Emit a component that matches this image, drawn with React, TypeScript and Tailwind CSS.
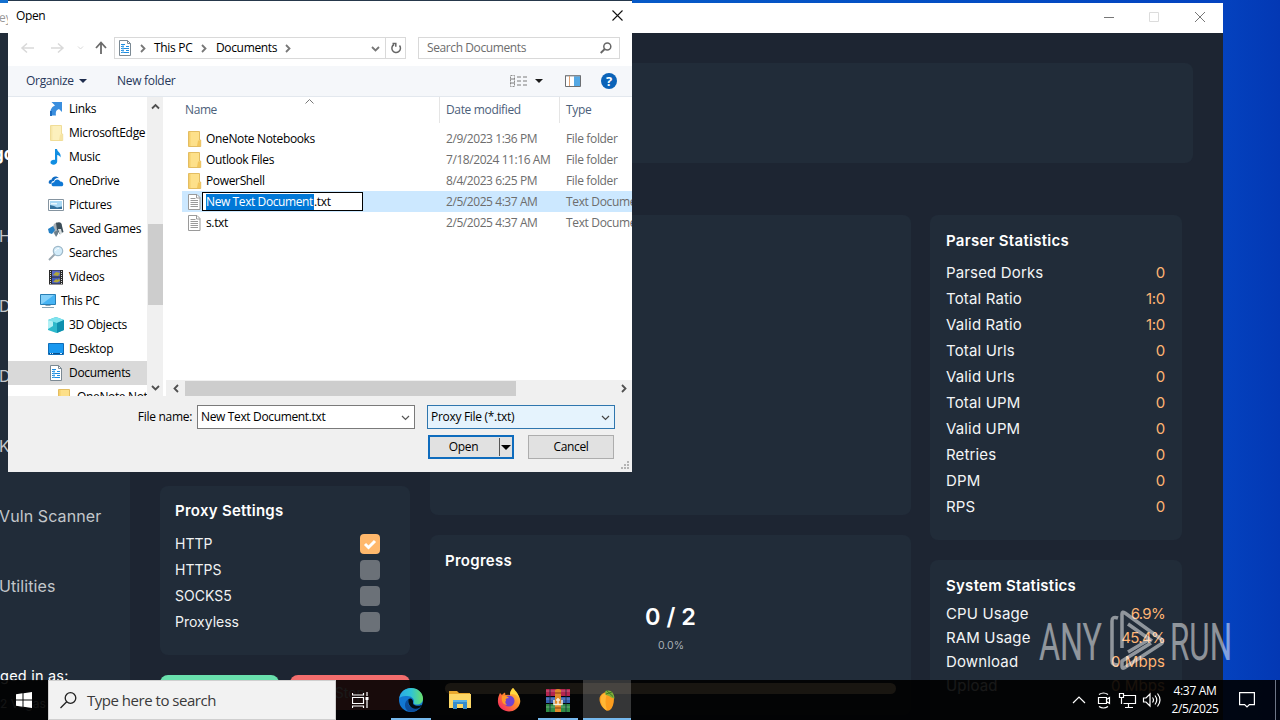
import type { ReactNode } from "react";

const SEGOE = "font-['Open_Sans','Noto_Sans',sans-serif]";
const POPPINS = "font-['Inter','Open_Sans',sans-serif]";

const parserStats = [
  { label: "Parsed Dorks", value: "0" },
  { label: "Total Ratio", value: "1:0" },
  { label: "Valid Ratio", value: "1:0" },
  { label: "Total Urls", value: "0" },
  { label: "Valid Urls", value: "0" },
  { label: "Total UPM", value: "0" },
  { label: "Valid UPM", value: "0" },
  { label: "Retries", value: "0" },
  { label: "DPM", value: "0" },
  { label: "RPS", value: "0" },
];

const systemStats = [
  { label: "CPU Usage", value: "6.9%" },
  { label: "RAM Usage", value: "45.4%" },
  { label: "Download", value: "0 Mbps" },
  { label: "Upload", value: "0 Mbps" },
];

const proxyTypes = [
  { label: "HTTP", checked: true },
  { label: "HTTPS", checked: false },
  { label: "SOCKS5", checked: false },
  { label: "Proxyless", checked: false },
];

const sidebarItems = ["H", "D", "D", "K", "Vuln Scanner", "Utilities"];

const files = [
  { name: "OneNote Notebooks", date: "2/9/2023 1:36 PM", type: "File folder" },
  { name: "Outlook Files", date: "7/18/2024 11:16 AM", type: "File folder" },
  { name: "PowerShell", date: "8/4/2023 6:25 PM", type: "File folder" },
  { name: "New Text Document.txt", date: "2/5/2025 4:37 AM", type: "Text Document", editing: true },
  { name: "s.txt", date: "2/5/2025 4:37 AM", type: "Text Document" },
];

function Icon({ children, className = "" }: { children: ReactNode; className?: string }) {
  return (
    <svg viewBox="0 0 16 16" className={`block h-4 w-4 shrink-0 ${className}`} fill="none">
      {children}
    </svg>
  );
}

function Chevron({ dir, thin, className = "" }: { dir: "up" | "down" | "left" | "right"; thin?: boolean; className?: string }) {
  const paths = {
    up: "M1 6.5 4.5 3 8 6.5",
    down: "M1 3 4.5 6.5 8 3",
    left: "M6 1 2.5 4.5 6 8",
    right: "M3 1 6.5 4.5 3 8",
  };
  return (
    <svg viewBox="0 0 9 9" className={`block h-[9px] w-[9px] shrink-0 ${className}`} fill="none">
      <path d={paths[dir]} stroke="currentColor" strokeWidth={thin ? 1.2 : 1.8} />
    </svg>
  );
}

function FolderIcon({ pale = false }: { pale?: boolean }) {
  return (
    <Icon>
      <path d="M2.5.5h11V9h1.2v6.5H2.5z" fill={pale ? "#fcf0bd" : "#fde08a"} stroke={pale ? "#f0dd98" : "#e3bd62"} />
      <path d="M12 9.5h2.5V15H11z" fill={pale ? "#f6e4a4" : "#f2c65c"} />
      <path d="M3 1h1.5v14H3z" fill={pale ? "#f7e7aa" : "#f6cf6c"} />
    </Icon>
  );
}

function TextFileIcon() {
  return (
    <Icon>
      <path d="M2.5.5H11l3 3v12H2.5z" fill="#fff" stroke="#9a9a9a" />
      <path d="M10.500.5V4H14M4.500 4.500h5M4.500 6.500H12M4.500 8.500H12M4.500 10.500H12M4.500 12.500H12" stroke="#9a9a9a" />
    </Icon>
  );
}

function DocumentsIcon() {
  return (
    <Icon>
      <path d="M2.500.5h8l3 3v12h-11z" fill="#fff" stroke="#7b8993" />
      <path d="M10.500.5v3h3" stroke="#7b8993" />
      <path d="M4 4.500h4M4 6.500h3M9 6.500h3M4 8.500h8M4 10.500h3M9 10.500h3M4 12.500h8" stroke="#1f8de0" strokeWidth="1.200" />
      <path d="M6 5v8" stroke="#6bb8ee" />
    </Icon>
  );
}

const treeItems: { label: string; icon: ReactNode; root?: boolean; selected?: boolean }[] = [
  {
    label: "Links",
    icon: (
      <Icon>
        <path d="M3.500 1H14v10l-3-3c-3 1-3.500 3-3 6.500H3C1.500 10 3 6 7 4.500z" fill="#3a8ede" />
        <path d="M2 10h2v5H2z" fill="#1d6cc0" />
      </Icon>
    ),
  },
  { label: "MicrosoftEdge", icon: <FolderIcon pale /> },
  {
    label: "Music",
    icon: (
      <Icon>
        <path d="M7 0h2c.3 3 4.500 3.500 3.500 8.500-.7-1.700-1.700-2.300-3.300-2.500v6.500c0 2-1.700 3.200-3.700 3.200-1.600 0-3-.8-3-2.200 0-1.800 2-3 4.500-2.600z" fill="#118ee2" />
      </Icon>
    ),
  },
  {
    label: "OneDrive",
    icon: (
      <Icon>
        <path d="M1 10.500C0 8 2 6.500 3.500 6.700 4 3.500 8.500 2 11 5.300c-3-.8-4.500 1-5 2.700-2 0-2.800 1.300-2.500 3z" fill="#0f6cc4" />
        <path d="M5 13.300c-2.500-.8-1.500-4.300 1.200-4.100.4-3.400 4.900-3.700 6-.7 2.800-.5 4.300 3.500 1.800 4.800z" fill="#0f78d4" />
      </Icon>
    ),
  },
  {
    label: "Pictures",
    icon: (
      <Icon>
        <path d="M.5 2.500h15v11H.5z" fill="#fff" stroke="#8594a0" />
        <path d="M2 4h12v8H2z" fill="#a9d8f4" />
        <path d="m2 8 4 1 3 1.500 5-1V12H2z" fill="#34719c" />
        <path d="M3 6h6v1.500H3z" fill="#e8f6fd" />
      </Icon>
    ),
  },
  {
    label: "Saved Games",
    icon: (
      <Icon>
        <path d="m4 8 2-5 3-2 1 6-2 8-2-2z" fill="#aab2b8" />
        <path d="M8 2c4-2 6 0 6 3l1.500 6-4 2-2.500-4z" fill="#3c4e59" />
        <path d="M10 8h3l1 4-2 2z" fill="#d8dee0" />
        <path d="m0 8 5-3 2 4-3 4-3-1z" fill="#2580c4" />
        <path d="m6 11 4-2v4l-2 3z" fill="#6b7e8b" />
      </Icon>
    ),
  },
  {
    label: "Searches",
    icon: (
      <Icon>
        <path d="m1 15 6-6" stroke="#9aa7b0" strokeWidth="2" />
        <circle cx="10" cy="6" r="4.700" fill="#d3ecfa" stroke="#9fb9c9" strokeWidth="1.200" />
        <path d="M7.500 6C8 4 9 3.500 11 3.300" stroke="#fff" />
      </Icon>
    ),
  },
  {
    label: "Videos",
    icon: (
      <Icon>
        <path d="M1 1h14v14.500H1z" fill="#2b2b2b" />
        <path d="M4 1.500h8v6H4z" fill="#5a68c8" />
        <path d="M4 8.500h8v6H4z" fill="#445ac0" />
        <path d="m5 6 3-3 4 1-2 3zM5 13l3-3 2 1 1-2 1 3-3 1.500z" fill="#b2a737" />
        <path d="M2.500 2v13M13.500 2v13" stroke="#d8d8d8" strokeDasharray="1 1" />
      </Icon>
    ),
  },
  {
    label: "This PC",
    root: true,
    icon: (
      <Icon>
        <path d="M.5 1.500h15v10H.5z" fill="#47b4f4" stroke="#297fb5" />
        <path d="M1 2h13L2 11H1z" fill="#85d1fa" />
        <path d="M5.500 12.500h5M2 14.500h12" stroke="#8aa3b3" />
      </Icon>
    ),
  },
  {
    label: "3D Objects",
    icon: (
      <Icon>
        <path d="m8 0 8 3v10l-7.500 3L0 13V3z" fill="#2cb8cb" />
        <path d="m8 0 8 3-7 3-9-3z" fill="#7fe3ee" />
        <path d="M9 6 16 3v10l-7 3z" fill="#0d8fae" />
        <path d="m0 3 5 1.500V9L0 12z" fill="#b2f0f5" />
      </Icon>
    ),
  },
  {
    label: "Desktop",
    icon: (
      <Icon>
        <path d="M.5 2.500h15v11H.5z" fill="#1898f0" stroke="#0f6db8" />
        <path d="M1 12.500h14" stroke="#0a4f8a" />
        <path d="M2 12.500h1M4 12.500h1M12 12.500h2" stroke="#d4ecfc" />
      </Icon>
    ),
  },
  { label: "Documents", icon: <DocumentsIcon />, selected: true },
];

function Card({ title, className = "", children }: { title?: string; className?: string; children?: ReactNode }) {
  return (
    <section className={`shrink-0 rounded-lg bg-[#212c39] ${className}`}>
      {title && <h2 className="h-[22px] text-[15px] leading-[22px] font-semibold tracking-[0.27px] text-white">{title}</h2>}
      {children}
    </section>
  );
}

function ParserApp() {
  return (
    <div className={`absolute top-[3px] left-0 flex h-[717px] w-[1223px] flex-col overflow-hidden bg-[#1d2532] ${POPPINS}`}>
      <header className="flex h-[30px] shrink-0 items-center bg-white text-[#8c8c8c]">
        <span className={`-ml-px text-[12px] text-[#999] ${SEGOE}`}>ey</span>
        <div className="ml-auto flex">
          <svg viewBox="0 0 138 30" className="h-[30px] w-[138px]" fill="none">
            <path d="M19 14.500h10" stroke="#777" />
            <path d="M64.500 9.500h9v9h-9z" stroke="#dcdcdc" />
            <path d="m110 9 10 10m0-10-10 10" stroke="#777" />
          </svg>
        </div>
      </header>
      <div className="flex min-h-0 flex-1">
        <aside className="flex w-[130px] shrink-0 flex-col bg-[#212c39] text-[16px] text-[#c3c7cb]">
          <div className="mt-[106px] h-[30px] shrink-0 text-[17px] leading-[30px] font-bold text-white">
            <span className="-ml-[7px]">go</span>
          </div>
          <nav className="mt-8 flex shrink-0 flex-col">
            {sidebarItems.map((item, i) => (
              <div key={i} className="-ml-px flex h-[70px] items-center tracking-[0.1px] whitespace-nowrap">
                {item}
              </div>
            ))}
          </nav>
          <div className="mt-[43px] -ml-[9px] h-6 shrink-0 text-[14.5px] leading-6 tracking-[0.2px] whitespace-nowrap text-white">gged in as:</div>
          <div className="mt-2 shrink-0 text-[12px] leading-4 whitespace-nowrap">2 Vegas</div>
        </aside>
        <main className="flex flex-1 flex-col pt-[30px] pl-[30px]">
          <Card className="h-[100px] w-[1033px]" />
          <div className="mt-[52px] flex min-h-0 flex-1 items-start">
            <div className="flex w-[250px] shrink-0 flex-col">
              <Card className="h-[251px]" />
              <Card title="Proxy Settings" className="mt-5 h-[169px] px-[15px] pt-3.5">
                <div className="mt-2">
                  {proxyTypes.map(({ label, checked }) => (
                    <div key={label} className="flex h-[26px] items-center justify-between pr-[15px] text-[14px] text-[#f0f2f3]">
                      <span>{label}</span>
                      <span className={`mt-px flex h-5 w-5 items-center justify-center rounded ${checked ? "bg-[#ffb86c]" : "bg-[#6b7178]"}`}>
                        {checked && (
                          <svg viewBox="0 0 14 12" className="h-3 w-3.5" fill="none">
                            <path d="m2 6 3.500 3.500L12 3" stroke="#fff" strokeWidth="3" />
                          </svg>
                        )}
                      </span>
                    </div>
                  ))}
                </div>
              </Card>
              <div className="mt-5 flex gap-[11px] text-[14px] text-white">
                <button className="h-[35px] w-[119px] rounded-lg bg-[#69e0ad]">Start</button>
                <button className="h-[35px] w-[120px] rounded-lg bg-[#f36d6d]">Stop</button>
              </div>
            </div>
            <div className="ml-5 flex w-[481px] shrink-0 flex-col gap-5">
              <Card className="h-[300px]" />
              <Card title="Progress" className="h-[180px] px-[15px] pt-[15px]">
                <div className="mt-[29px] text-center text-[23.5px] leading-[32px] font-semibold text-white">0 / 2</div>
                <div className="mt-[5px] pl-px text-center text-[10.5px] leading-4 text-[#a9afb5]">0.0%</div>
                <div className="mt-[29px] h-[11px] rounded-full bg-[#ffd9a8]" />
              </Card>
            </div>
            <div className="ml-[19px] flex w-[252px] shrink-0 flex-col gap-5">
              <Card title="Parser Statistics" className="h-[325px] px-4 pt-[15px]">
                <div className="mt-2">
                  {parserStats.map(({ label, value }) => (
                    <div key={label} className="flex h-[26px] items-center justify-between pr-px text-[15px] text-[#f3f5f6]">
                      <span className="tracking-[0.15px]">{label}</span>
                      <span className="tracking-[-0.3px] text-[#ffb573]">{value}</span>
                    </div>
                  ))}
                </div>
              </Card>
              <Card title="System Statistics" className="h-[170px] px-4 pt-[15px]">
                <div className="mt-[5px]">
                  {systemStats.map(({ label, value }) => (
                    <div key={label} className="flex h-6 items-center justify-between pr-px text-[15px] text-[#f3f5f6]">
                      <span className="tracking-[0.15px]">{label}</span>
                      <span className={`text-[#ffb573] ${value.endsWith("%") ? "tracking-[-0.7px]" : "tracking-[0.1px]"}`}>{value}</span>
                    </div>
                  ))}
                </div>
              </Card>
            </div>
          </div>
        </main>
      </div>
    </div>
  );
}

function OpenDialog() {
  return (
    <div className={`absolute top-0 left-2 flex h-[472px] w-[624px] flex-col overflow-hidden border-t border-[#26384b] bg-white text-[12px] leading-4 tracking-[-0.35px] text-black ${SEGOE}`}>
      <div className="flex h-[29px] shrink-0 items-center justify-between pr-[9px] pl-2">
        <span className="tracking-[-0.4px]">Open</span>
        <svg viewBox="0 0 11 11" className="h-[11px] w-[11px]">
          <path d="m.5.5 10 10m0-10-10 10" stroke="#111" strokeWidth="1.100" />
        </svg>
      </div>

      <div className="flex h-9 shrink-0 items-center pl-3">
        <svg viewBox="0 0 94 20" className="h-5 w-[94px] shrink-0" fill="none">
          <path d="M14 10H2m5-4.500L2 10l5 4.500" stroke="#d9d9d9" strokeWidth="1.500" />
          <path d="M31 10h12m-5-4.500 5 4.500-5 4.500" stroke="#d9d9d9" strokeWidth="1.500" />
          <path d="m58 8.500 2.500 2.500L63 8.500" stroke="#d9d9d9" />
          <path d="M81 16V5m-5 5 5-5.500 5 5.500" stroke="#6a6a6a" strokeWidth="1.800" />
        </svg>
        <div className="flex h-[22px] w-[292px] shrink-0 items-center border border-[#d9d9d9] pl-[2px]">
          <DocumentsIcon />
          <Chevron dir="right" className="ml-[5px] text-[#777]" />
          <span className="ml-[7px] w-[40px] tracking-[-0.3px] whitespace-nowrap">This PC</span>
          <Chevron dir="right" className="ml-[5px] text-[#777]" />
          <span className="ml-[8px] w-[62px]">Documents</span>
          <Chevron dir="right" className="ml-[5px] text-[#777]" />
          <Chevron dir="down" className="ml-auto text-[#777]" />
          <div className="ml-[5px] flex h-full w-[20px] items-center justify-center border-l border-[#d9d9d9]">
            <svg viewBox="0 0 12 12" className="h-3 w-3" fill="none">
              <path d="M9.500 3.500A4.300 4.300 0 1 1 4 2.500M2.500 1.500h3.300v3.300" stroke="#666" strokeWidth="1.500" />
            </svg>
          </div>
        </div>
        <div className="ml-3 flex h-[22px] w-[202px] shrink-0 items-center justify-between border border-[#d9d9d9] pr-[7px] pl-2 text-[#6d6d6d]">
          <span className="tracking-[-0.4px]">Search Documents</span>
          <svg viewBox="0 0 12 12" className="h-3 w-3" fill="none">
            <circle cx="7.300" cy="4.500" r="3.500" stroke="#666" strokeWidth="1.500" />
            <path d="M4.800 7 .7 11" stroke="#666" strokeWidth="1.800" />
          </svg>
        </div>
      </div>

      <div className="flex h-[31px] shrink-0 items-center border-b border-[#e3e8ee] bg-[#f5f7fa] pl-[18px] text-[#27375b]">
        <span className="w-[48px] tracking-[-0.3px]">Organize</span>
        <svg viewBox="0 0 8 4" className="ml-[5px] h-1 w-2">
          <path d="M0 0h8L4 4z" fill="#1e2d4d" />
        </svg>
        <span className="ml-[30px] tracking-[-0.3px]">New folder</span>
        <svg viewBox="0 0 108 18" className="mr-[15px] ml-auto h-[18px] w-[108px] shrink-0" fill="none">
          <path d="M1.500 3.500h4v11h-4z" stroke="#8c8c8c" strokeDasharray="2 1" />
          <path d="M1 7h5M1 11h5M8 5h4M14 5h4M8 9h4M14 9h4M8 13h4M14 13h4" stroke="#7b7b7b" />
          <path d="M26 7h8l-4 4z" fill="#1b1b1b" />
          <path d="M56.500 3.500h15v11h-15z" fill="#fff" stroke="#6c6f72" />
          <path d="M65 4h6v10h-6z" fill="#54a8e4" />
          <path d="M57 4h14" stroke="#9aa0a5" />
          <path d="M60.500 4v10" stroke="#e0a274" />
          <circle cx="100" cy="9" r="8" fill="#0b63b8" />
          <text x="100" y="13.500" fill="#fff" fontSize="13" fontWeight="700" textAnchor="middle">?</text>
        </svg>
      </div>

      <div className="flex h-[299px] shrink-0">
        {/* navigation tree */}
        <div className="h-full w-[139px] shrink-0 overflow-hidden">
          {treeItems.map(({ label, icon, root, selected }) => (
            <div
              key={label}
              className={`flex h-6 items-center gap-[5px] whitespace-nowrap ${root ? "pl-8" : "pl-10"} ${selected ? "bg-[#d9d9d9]" : ""}`}
            >
              {icon}
              <span className="tracking-[-0.3px]">{label}</span>
            </div>
          ))}
          <div className="flex h-6 items-center gap-[5px] pl-12 whitespace-nowrap">
            <FolderIcon />
            <span>OneNote Notebooks</span>
          </div>
        </div>
        <div className="flex w-4 shrink-0 flex-col items-center bg-[#f0f0f0]">
          <Chevron dir="up" className="mt-[5px] text-[#505050]" />
          <div className="mt-[113px] h-[81px] w-[15px] bg-[#cdcdcd]" />
          <Chevron dir="down" className="mt-auto mb-1 text-[#505050]" />
        </div>

        {/* file list */}
        <div className="relative flex min-w-0 flex-1 flex-col">
          <div className="flex h-[26px] shrink-0 items-center text-[#4c607a]">
            <span className="ml-[22px] tracking-[-0.4px]">Name</span>
            <span className="ml-auto flex h-full w-[120px] items-center border-l border-[#e5e5e5] pl-1.5">Date modified</span>
            <span className="flex h-full w-[73px] items-center border-l border-[#e5e5e5] pl-1.5">Type</span>
          </div>
          <svg viewBox="0 0 9 5" className="absolute top-0.5 left-[142px] h-[5px] w-[9px]" fill="none">
            <path d="m.5 4.500 4-4 4 4" stroke="#777" />
          </svg>
          <div className="mt-[5px] overflow-hidden">
            {files.map(({ name, date, type, editing }) => (
              <div key={name} className={`ml-[19px] flex h-[21px] items-center whitespace-nowrap ${editing ? "bg-[#cce8ff]" : ""}`}>
                <span className="ml-1">{type === "File folder" ? <FolderIcon /> : <TextFileIcon />}</span>
                {editing ? (
                  <span className="flex h-[19px] w-[161px] shrink-0 items-center border border-black bg-white pl-[3px]">
                    <span className="w-[108px] shrink-0 bg-[#0078d7] tracking-[-0.4px] text-white">New Text Document</span>
                    <span>.txt</span>
                  </span>
                ) : (
                  <span className="ml-1 w-[157px] shrink-0">{name}</span>
                )}
                <span className="ml-[83px] w-[120px] shrink-0 tracking-[-0.43px] text-[#6d6d6d]">{date}</span>
                <span className="text-[#6d6d6d]">{type}</span>
              </div>
            ))}
          </div>
          <div className="mt-auto ml-[3px] flex h-4 items-center bg-[#f0f0f0] pr-1">
            <Chevron dir="left" className="ml-[6px] text-[#505050]" />
            <div className="ml-1 h-[15px] w-[331px] bg-[#cdcdcd]" />
            <Chevron dir="right" className="ml-auto text-[#505050]" />
          </div>
        </div>
      </div>

      <div className="relative flex flex-1 flex-col bg-[#f0f0f0] pt-[9px] pr-[17px]">
        <div className="flex h-6 items-center">
          <span className="ml-auto tracking-[-0.3px]">File name:</span>
          <div className="ml-[5px] flex h-6 w-[218px] items-center justify-between border border-[#7a7a7a] bg-white pr-1 pl-[3px]">
            <span>New Text Document.txt</span>
            <Chevron dir="down" thin className="text-[#555]" />
          </div>
          <div className="ml-3 flex h-6 w-[188px] items-center justify-between border border-[#2f76ae] bg-[#e5f3fd] pr-1 pl-[3px]">
            <span className="tracking-[-0.3px]">Proxy File (*.txt)</span>
            <Chevron dir="down" thin className="text-[#444]" />
          </div>
        </div>
        <div className="mt-1.5 flex justify-end pr-px">
          <button className="flex h-6 w-[86px] items-center border-2 border-[#0f6cbd] bg-[#e1e1e1]">
            <span className="flex-1 pr-0.5">Open</span>
            <span className="flex h-[18px] w-[13px] items-center justify-center border-l border-[#555]">
              <svg viewBox="0 0 10 5" className="h-[5px] w-2.5">
                <path d="M0 0h10L5 5z" />
              </svg>
            </span>
          </button>
          <button className="ml-3.5 h-6 w-[86px] border border-[#adadad] bg-[#e1e1e1]">Cancel</button>
        </div>
        <svg viewBox="0 0 9 9" className="absolute right-0.5 bottom-0.5 h-[9px] w-[9px] text-[#b4b4b4]" fill="currentColor">
          <path d="M6 0h2v2H6zM6 3h2v2H6zM6 6h2v2H6zM3 3h2v2H3zM3 6h2v2H3zM0 6h2v2H0z" />
        </svg>
      </div>
    </div>
  );
}

function EdgeIcon() {
  return (
    <svg viewBox="0 0 24 24" className="h-6 w-6">
      <defs>
        <linearGradient id="edgeTop" x1="0" x2="1">
          <stop stopColor="#2ba9e6" />
          <stop offset=".5" stopColor="#2fc4d5" />
          <stop offset="1" stopColor="#6be06a" />
        </linearGradient>
      </defs>
      <circle cx="12" cy="12" r="12" fill="#1277d2" />
      <path d="M.3 10C1.500 3.500 6.500 0 12 0c7 0 12 5 12 10.500 0 4-3 6-6 6-2 0-3.700-.8-3.300-1.800 1-2.500-.7-5.700-5-6.400C6 7.500 2.500 8 .3 10z" fill="url(#edgeTop)" />
      <path d="M9.500 11c-1.700 4 .5 8.500 5.500 9 2.500.3 5-.8 7-2.300C19 23 14.500 24.500 10 23.600 5 21.500 4.500 14 9.500 11z" fill="#0c4d9c" />
      <path d="M9.500 11c2.500-1.700 5 .5 4.500 3.500-.3 2 2 3.500 5.500 3.300 1.500-.1 3-.6 4-1.300-2 3.500-5.500 4.800-8.500 4-4-1-6.500-5-5.500-9.500z" fill="#050b12" />
    </svg>
  );
}

function ExplorerIcon() {
  return (
    <svg viewBox="0 0 22 20" className="h-5 w-[22px]">
      <path d="M0 1h8l2 2h11v15H0z" fill="#e8a92e" />
      <path d="M0 4h22v14H0z" fill="#fcd766" />
      <path d="M4 19v-7q0-2 2-2h10q2 0 2 2v7h-4v-5H8v5z" fill="#368ccb" />
      <path d="M4 10h14v2H4z" fill="#58b0e5" />
    </svg>
  );
}

function FirefoxIcon() {
  return (
    <svg viewBox="0 0 24 24" className="h-6 w-6">
      <defs>
        <linearGradient id="fox" x1="1" y1="0" x2="0" y2="1">
          <stop stopColor="#ffe14a" />
          <stop offset=".45" stopColor="#ff8a2a" />
          <stop offset="1" stopColor="#f5156c" />
        </linearGradient>
      </defs>
      <path d="M16 0c2 2 2 3 2.500 4.500C22 7 24 11 23 15c-1.500 5.500-6 8.500-11 8.500S1.500 20 1 14.500C.5 10 2 7 3 5l2 2c1-1.500 2-2 3-2.500L8.500 7c2-.5 3.500-.5 4.500 0C13 4 14 2 16 0z" fill="url(#fox)" />
      <circle cx="12" cy="13" r="5.500" fill="#7043cf" />
      <path d="M5 8c2-1 5 0 7 2-3 0-4 1-3 2.500-1 1-1 3 1 4.500-4 0-6-4-5-9z" fill="#ff9a28" />
      <path d="M16 0c2 3 5.500 4.500 6 10-2-4-5-4-9-3.500C13 4 14 2 16 0z" fill="#ffd83f" />
    </svg>
  );
}

function WinRarIcon() {
  return (
    <svg viewBox="0 0 24 23" className="h-[23px] w-6">
      <path d="M0 0h24v7H0z" fill="#b5254f" />
      <path d="M0 8h24v6H0z" fill="#355fae" />
      <path d="M0 15h24v8H0z" fill="#2f8b45" />
      <path d="M0 2h24M0 10h24M0 18h24" stroke="#fff" strokeOpacity=".3" />
      <path d="M3 0h2v23H3zM19 0h2v23h-2z" fill="#16243d" fillOpacity=".4" />
      <path d="M9 1q3-2 6 0v22H9z" fill="#e08a2a" />
      <path d="M8 11v4.500h8V11M12 9v7M10 11h4" stroke="#f8efdc" strokeWidth="1.500" fill="none" />
      <path d="M9 4h6M9 19h6" stroke="#a4561c" strokeWidth="1.300" />
    </svg>
  );
}

function MangoIcon() {
  return (
    <svg viewBox="0 0 16 24" className="h-6 w-4">
      <path d="M3 6C7 2 15.500 4 15 10.500c0 5.500-1.500 9.500-4 11.500-1.500 1-3.500 1-5-.5C2 18.500.5 14 .5 11 .5 9 1.500 7 3 6z" fill="#fb9d1e" />
      <path d="M3 7c2-2 4-2 5-1-2 5-2 10 0 16.500C3 20.500 0 12 3 7z" fill="#ffb735" />
      <path d="M6 3.500c5-2.500 9 .5 9.500 7-3 0-4.500-3-9-3.500z" fill="#7dad3a" />
      <path d="m7 2 7 6.500M7 6l6-2" stroke="#3f7726" />
    </svg>
  );
}

function TaskButton({ width, active, running, children }: { width: string; active?: boolean; running?: boolean; children: ReactNode }) {
  return (
    <div className={`relative flex h-10 shrink-0 items-center justify-center ${width} ${active ? "bg-white/20" : ""}`}>
      {children}
      {running && <span className={`absolute bottom-0 h-0.5 bg-[#76b9ed] ${active ? "w-full" : "w-10"}`} />}
    </div>
  );
}

function Taskbar() {
  return (
    <div className={`absolute bottom-0 left-0 flex h-10 w-full items-center bg-black/90 text-white ${SEGOE}`}>
      <div className="flex h-10 w-12 shrink-0 items-center justify-center">
        <svg viewBox="0 0 16 16" className="h-4 w-4" fill="#fff">
          <path d="M0 2.200 6.500 1.300v6.200H0zM7.500 1.200 16 0v7.500H7.500zM0 8.500h6.500v6.200L0 13.800zM7.500 8.500H16V16l-8.500-1.200z" />
        </svg>
      </div>
      <div className="flex h-10 w-72 shrink-0 items-center border border-[#cfcfcf] bg-[#f2f2f2] text-[15px] text-[#3a3a3a]">
        <svg viewBox="0 0 17 17" className="ml-[11px] h-[17px] w-[17px]" fill="none">
          <circle cx="10.500" cy="6" r="5.300" stroke="#222" strokeWidth="1.300" />
          <path d="M6.700 9.800.5 16" stroke="#222" strokeWidth="1.300" />
        </svg>
        <span className="ml-2.5 tracking-[-0.48px]">Type here to search</span>
      </div>
      <TaskButton width="w-[50px]">
        <svg viewBox="0 0 17 17" className="-ml-0.5 h-[17px] w-[17px]" fill="none">
          <path d="M.5 1v2h11V1M.5 5.500h11v6H.5zM.5 16v-2h11v2M15 0v4M15 8v8" stroke="#fff" strokeWidth="1.200" />
          <path d="M13.500 5h3v3h-3z" fill="#fff" />
        </svg>
      </TaskButton>
      <TaskButton width="w-[49px]" running><EdgeIcon /></TaskButton>
      <TaskButton width="w-[49px]"><ExplorerIcon /></TaskButton>
      <TaskButton width="w-[49px]"><FirefoxIcon /></TaskButton>
      <TaskButton width="w-[50px]" running><WinRarIcon /></TaskButton>
      <TaskButton width="w-[48px]" active running><MangoIcon /></TaskButton>

      <div className="ml-auto flex h-full items-center">
        <svg viewBox="0 0 92 20" className="h-5 w-[92px]" fill="none" stroke="#fff" strokeWidth="1.200">
          <path d="m2 13 6-6 6 6" />
          <path d="M27.500 7.500h8v6h-8zM35.500 9.500l3-2v6l-3-2M28 4.500q4.500-3 9 0M28 16.500q4.500 3 9 0" />
          <path d="M52.500 5.500h12v8h-12M57.500 14v3M54 17.500h8" />
          <path d="M48.500 3.500h4v4h-4zM50.500 7.500v6.500" />
          <path d="M72.500 8h2.500l4-4v12l-4-4h-2.500zM81.500 7.500q2 2.500 0 5M84 5.500q3.500 4.500 0 9M86.500 3.500q5 6.500 0 13" />
        </svg>
        <div className="ml-1.5 flex w-[50px] flex-col items-center pl-0.5 text-[12px] leading-[18px] whitespace-nowrap">
          <span className="tracking-[-0.3px]">4:37 AM</span>
          <span className="tracking-[-0.4px]">2/5/2025</span>
        </div>
        <svg viewBox="0 0 16 16" className="ml-[20px] h-4 w-4" fill="none">
          <path d="M.6.6h14.800v12h-5L8 15l-2.400-2.400h-5z" stroke="#fff" strokeWidth="1.200" />
        </svg>
        <div className="ml-[20px] h-10 w-[5px] border-l border-[#6e7687]" />
      </div>
    </div>
  );
}

function Watermark() {
  return (
    <svg viewBox="0 0 192 62" className="absolute top-[610px] left-[1039px] h-[62px] w-48 opacity-50" fill="none">
      <g fill="#fff" fontFamily="Roboto, sans-serif" fontSize="52">
        <text x="0" y="50" textLength="63" lengthAdjust="spacingAndGlyphs">ANY</text>
        <text x="131" y="50" textLength="62" lengthAdjust="spacingAndGlyphs">RUN</text>
      </g>
      <g stroke="#fff" strokeWidth="3.500" strokeLinejoin="round">
        <path d="M79 8q-6-2-6 3v40q0 4 6 4" />
        <path d="M83 38V4q0-3 3-1l36 26q3 3 0 5L85 58q-2 1-2-2v-5l29-18" />
        <path d="m89 14 24 17M89 42l22-13" />
      </g>
    </svg>
  );
}

export default function App() {
  return (
    <div className="relative h-[720px] w-[1280px] overflow-hidden bg-linear-to-r from-[#1470cf] from-0% via-[#0443c0] via-95% to-[#0338b4]">
      <ParserApp />
      <OpenDialog />
      <Taskbar />
      <Watermark />
    </div>
  );
}
